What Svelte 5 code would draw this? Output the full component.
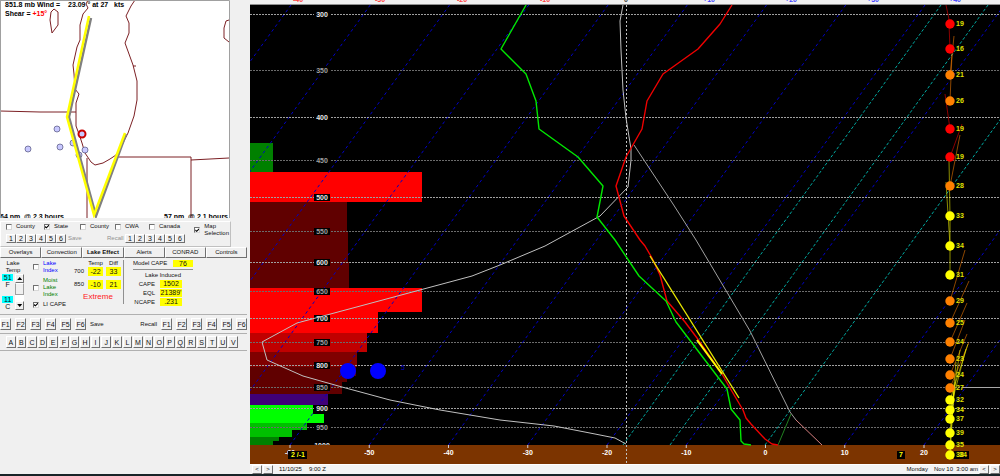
<script lang="ts">
  type Point = [number, number];

  const states = [
    '88,0 86,4 88,8 83,14 80,25 80,40 77,47 73,65 74,74 75,89 79,94 76,103 76,126 79,134 82,143 85,153 91,162 95,165 103,163 110,159 116,155',
    '135,0 131,6 126,16 129,23 129,33 125,43 133,65 137,81 137,100 134,116 128,133 122,145 116,155',
    '54,9 51,12 50,20 52,33 58,25 58,12 54,9',
    '229,20 226,21 224,28 224,38 229,42',
    '0,111 40,112 76,112',
    '87,158 87,218',
    '116,157 191,157 191,218',
    '191,160 229,158',
    '133,66 136,66',
  ];

  const stations: Point[] = [[28, 149], [57, 129], [60, 147], [73, 143], [79, 155], [85, 150]];

  let layers = $state([
    { label: 'County', on: false },
    { label: 'State', on: true },
    { label: 'County', on: false },
    { label: 'CWA', on: false },
    { label: 'Canada', on: false },
  ]);

  const slots = [1, 2, 3, 4, 5, 6];
  const tabs = ['Overlays', 'Convection', 'Lake Effect', 'Alerts', 'CONRAD', 'Controls'];
  let activeTab = $state('Lake Effect');
  const letters = 'ABCDEFGHIJKLMNOPQRSTUV'.split('');

  const induced = [
    ['CAPE', '1502'],
    ['EQL', "21389'"],
    ['NCAPE', '.231'],
  ];

  const isobars = [
    { mb: 300, y: 14 }, { mb: 350, y: 70 }, { mb: 400, y: 117 }, { mb: 450, y: 160 },
    { mb: 500, y: 197 }, { mb: 550, y: 231 }, { mb: 600, y: 262 }, { mb: 650, y: 291 },
    { mb: 700, y: 318 }, { mb: 750, y: 342 }, { mb: 800, y: 365 }, { mb: 850, y: 387 },
    { mb: 900, y: 408 }, { mb: 950, y: 427 }, { mb: 1000, y: 445 },
  ];

  // omega bars: width, top, bottom, fill
  const bars: [number, number, number, string][] = [
    [23, 143, 172, '#008000'],
    [172, 172, 202, '#ff0000'],
    [97, 202, 232, '#600000'],
    [98, 232, 262, '#600000'],
    [99, 262, 288, '#600000'],
    [172, 288, 312, '#ff0000'],
    [128, 312, 333, '#ff0000'],
    [117, 333, 352, '#c00000'],
    [107, 352, 367, '#800000'],
    [106, 367, 376, '#600000'],
    [97, 376, 382, '#600000'],
    [92, 382, 394, '#600000'],
    [78, 394, 405, '#400078'],
    [63, 405, 414, '#00ff00'],
    [74, 414, 423, '#00ff00'],
    [57, 423, 430, '#00c000'],
    [42, 430, 437, '#00c000'],
    [29, 437, 441, '#008000'],
    [23, 441, 445, '#008000'],
  ];

  // the 0 degree line is left to the mixing ratio drawn over it
  const isotherms = [-8, -7, -6, -5, -4, -3, -2, -1, 0, 1, 2, 3, 4, 5, 7, 8].map((i) => 40 + i * 79.25);
  const mixing = [373, 420, 515];
  const skew = 318;

  const temps = [-60, -50, -40, -30, -20, -10, 0, 10, 20].map((t, i) => ({ t, x: 40 + i * 79.25 }));

  const topTemps = [
    { t: '-40', x: 48, warm: true }, { t: '-30', x: 130, warm: true }, { t: '-20', x: 212, warm: true },
    { t: '-10', x: 295, warm: true }, { t: '0', x: 376, warm: false }, { t: '+10', x: 459, warm: false },
    { t: '+20', x: 541, warm: false }, { t: '+30', x: 623, warm: false }, { t: '+40', x: 705, warm: false },
  ];

  const RED = '#ff0000';
  const ORANGE = '#ff8000';
  const YELLOW = '#ffff00';

  // wind level: y, speed, colour, barb tip
  const winds: [number, string, string, Point][] = [
    [24, '19', RED, [696, 5]],
    [49, '16', RED, [699, 24]],
    [75, '21', ORANGE, [704, 36]],
    [101, '26', ORANGE, [702, 54]],
    [129, '19', RED, [695, 94]],
    [157, '19', RED, [712, 124]],
    [186, '28', ORANGE, [710, 135]],
    [216, '33', YELLOW, [699, 160]],
    [246, '34', YELLOW, [696, 182]],
    [275, '31', YELLOW, [700, 218]],
    [301, '29', ORANGE, [715, 250]],
    [323, '25', ORANGE, [719, 281]],
    [342, '24', ORANGE, [717, 303]],
    [359, '23', ORANGE, [715, 320]],
    [375, '24', ORANGE, [717, 334]],
    [388, '27', ORANGE, [719, 342]],
    [400, '32', YELLOW, [718, 344]],
    [410, '34', YELLOW, [716, 349]],
    [419, '37', YELLOW, [710, 350]],
    [433, '39', YELLOW, [706, 362]],
    [445, '35', YELLOW, [705, 382]],
    [455, '38', YELLOW, [704, 390]],
  ];
</script>

<main>
  <aside>
    <svg class="map" viewBox="0 0 230 218" role="img" aria-label="Lake Michigan map">
      <rect width="230" height="218" fill="#fff" />
      {#each states as points}
        <polyline {points} fill="none" stroke="#7c2024" />
      {/each}
      {#each stations as [cx, cy]}
        <circle {cx} {cy} r="3" fill="#c8c8ff" stroke="#50507c" stroke-width=".7" />
      {/each}
      <polyline points="91,18 69,117 96,216 126,134" fill="none" stroke="#808080" stroke-width="2.5" />
      <polyline points="89,16 67,117 94,215 125,133" fill="none" stroke="#ffff00" stroke-width="2.5" />
      <circle cx="82" cy="134" r="3.5" fill="#c8c8ff" stroke="#c80000" stroke-width="2" />
      <text x="5" y="7">851.8 mb Wind =</text>
      <text x="68" y="7">23.09 ° at 27&nbsp;&nbsp; kts</text>
      <text x="5" y="16">Shear = <tspan fill="#f00">+15°</tspan></text>
      <text x="0" y="219">64 nm&nbsp; @ 2.3 hours</text>
      <text x="228" y="219" text-anchor="end">57 nm&nbsp; @ 2.1 hours</text>
      <path d="M0 .5H229.500V218M.5 0V218" fill="none" stroke="#a0a0a0" />
    </svg>

    <section class="options">
      <div>
        <div class="layers">
          {#each layers as layer}
            <label><input type="checkbox" bind:checked={layer.on} />{layer.label}</label>
          {/each}
        </div>
        <div class="slots">
          {#each slots as n}<button type="button">{n}</button>{/each}
          <span class="save">Save</span>
          <span class="recall">Recall</span>
          {#each slots as n}<button type="button">{n}</button>{/each}
        </div>
      </div>
      <label class="selection"><input type="checkbox" checked /><span>Map<br />Selection</span></label>
    </section>

    <nav class="tabs">
      {#each tabs as tab}
        <button type="button" class:active={tab === activeTab} onclick={() => (activeTab = tab)}>{tab}</button>
      {/each}
    </nav>

    <section class="lake">
      <div class="lake-temp">
        <div class="center">Lake<br />Temp</div>
        <div class="temp-row">
          <div class="readings">
            <span class="cyan">51</span>
            <span>F</span>
            <span class="cyan second">11</span>
            <span>C</span>
          </div>
          <div class="scroller">
            <button type="button" aria-label="Warmer"><i class="up"></i></button>
            <div class="track"><span></span></div>
            <button type="button" aria-label="Colder"><i class="down"></i></button>
          </div>
        </div>
      </div>

      <div class="indices">
        <label class="blue"><input type="checkbox" /><span>Lake<br />Index</span></label>
        <label class="green"><input type="checkbox" /><span>Moist<br />Lake<br />Index</span></label>
        <label><input type="checkbox" checked /><span>LI CAPE</span></label>
      </div>

      <div class="diffs">
        <table>
          <thead>
            <tr><th></th><th>Temp</th><th>Diff</th></tr>
          </thead>
          <tbody>
            <tr><th>700</th><td><b>-22</b></td><td><b>33</b></td></tr>
            <tr><th>850</th><td><b>-10</b></td><td><b>21</b></td></tr>
          </tbody>
        </table>
        <p>Extreme</p>
      </div>

      <div class="cape">
        <div class="model"><span>Model CAPE</span><b>76</b></div>
        <div class="title">Lake Induced</div>
        <dl>
          {#each induced as [name, value]}
            <dt>{name}</dt>
            <dd>{value}</dd>
          {/each}
        </dl>
      </div>
    </section>

    <section class="functions">
      {#each slots as n}<button type="button">F{n}</button>{/each}
      <span class="fsave">Save</span>
      <span>Recall</span>
      {#each slots as n}<button type="button">F{n}</button>{/each}
    </section>

    <section class="letters">
      {#each letters as letter}<button type="button">{letter}</button>{/each}
    </section>
  </aside>

  <div class="sounding">
    <svg viewBox="0 0 750 464" role="img" aria-label="Skew-T sounding">
      <defs>
        <clipPath id="top"><rect width="750" height="4" /></clipPath>
        <clipPath id="plot"><rect y="5" width="750" height="440" /></clipPath>
      </defs>
      <rect width="750" height="464" fill="#f0f0f0" />
      <g clip-path="url(#top)" text-anchor="middle">
        {#each topTemps as { t, x, warm }}
          <text {x} y="2" fill={warm ? '#ff4040' : t === '0' ? '#404040' : '#4040ff'}>{t}</text>
        {/each}
      </g>
      <rect y="4" width="750" height="1" fill="#909090" />
      <rect y="5" width="750" height="440" />
      <rect y="445" width="750" height="19" fill="#7c3400" />

      <g clip-path="url(#plot)">
        {#each bars as [width, top, bottom, fill]}
          <rect y={top} {width} height={bottom - top} {fill} shape-rendering="crispEdges" />
        {/each}
        {#each isotherms as x}
          <line x1={x} y1="445" x2={x + skew} y2="5" stroke="#0000c8" stroke-dasharray="3 3" />
        {/each}
        {#each mixing as x}
          <line x1={x} y1="445" x2={x + skew} y2="5" stroke="#00a8a0" stroke-dasharray="3 2" />
        {/each}
        {#each isobars as { mb, y }}
          {#if mb < 1000}
            <line x2="750" y1={y + 0.5} y2={y + 0.5} stroke={mb % 100 ? '#6c6c6c' : '#a0a0a0'} stroke-dasharray="2 1" />
          {/if}
          <rect x="64" y={y - 3} width="16" height="7" />
          <text x="72" y={y + 3} text-anchor="middle" fill={mb % 100 ? '#a0a0a0' : '#e8e8e8'}>{mb}</text>
        {/each}
      </g>

      <line x1="376.500" y1="5" x2="376.500" y2="464" stroke="#c0c0c0" stroke-dasharray="2 2" />
      <line x1="713" y1="387.500" x2="750" y2="387.500" stroke="#a8a8a8" />

      <g fill="none" stroke-linejoin="round">
        <polyline points="373,5 370,21 371,50 373,90 376,118 381,149 381,160 378,187 350,216 295,246 250,265 222,276 47,323 12,342 17,360 53,376 92,387 140,400 190,410 250,420 304,426 345,434 365,438 376,444" stroke="#c0c0c0" />
        <polyline points="384,145 423,204 446,240 500,331 540,412 546,420" stroke="#a0a0a0" />
        <polyline points="546,420 572,445" stroke="#d88080" />
        <line x1="528" y1="445" x2="541" y2="414" stroke="#208020" />
        <polyline points="482,5 470,24 448,49 413,74 397,101 392,129 376,157 366,186 374,216 390,240 395,246 402,258 410,275 417,301 435,322 447,338 472,374 480,388 493,410 496,418 501,424 515,439 522,444 528,445" stroke="#f00000" stroke-width="1.4" />
        <polyline points="276,5 251,49 276,74 286,101 289,129 328,157 353,186 347,217 365,240 389,276 416,301 426,322 477,389 481,409 490,420 491,441 494,444 501,445" stroke="#00e800" stroke-width="1.4" />
        <line x1="400" y1="256" x2="489" y2="398" stroke="#e8e800" stroke-width="1.4" />
        <line x1="447" y1="340" x2="472" y2="374" stroke="#ffff00" stroke-width="2" />
      </g>

      <circle cx="98" cy="371" r="8" fill="#00f" />
      <circle cx="128" cy="371" r="8" fill="#00f" />
      <text class="faint" x="151" y="370" fill="#0000c0">5</text>

      {#each temps as { t, x }}
        <line x1={x} y1="445" x2={x} y2="448" stroke="#d0d0d0" />
        <text {x} y="455" text-anchor="middle" fill="#fff">{t}</text>
      {/each}

      <g text-anchor="middle" fill="#ff0">
        <rect x="38" y="451" width="19" height="8" fill="#000" />
        <text x="48" y="457">2 /-1</text>
        <rect x="647" y="451" width="8" height="8" fill="#000" />
        <text x="651" y="457">7</text>
        <rect x="704" y="451" width="15" height="8" fill="#000" />
      </g>

      {#each winds as [y, , color, tip]}
        <line x1="700" y1={y} x2={tip[0]} y2={tip[1]} stroke={color} stroke-opacity=".55" />
      {/each}
      {#each winds as [y, speed, color]}
        <circle cx="700" cy={y} r="4.700" fill={color} />
        <text x="706" y={y + 2} fill="#e0e000">{speed}</text>
      {/each}
      <text x="709" y="457" fill="#e0e000">34</text>
    </svg>

    <footer>
      <button type="button" aria-label="Previous hour">&lt;</button>
      <button type="button" aria-label="Next hour">&gt;</button>
      <span class="date">11/10/25</span>
      <span>9:00 Z</span>
      <span class="local">Monday</span>
      <span>Nov 10&nbsp; 3:00 am</span>
      <button type="button" aria-label="Previous day">&lt;</button>
      <button type="button" aria-label="Next day">&gt;</button>
    </footer>
  </div>
</main>

<style>
  :global(body) {
    margin: 0;
    background: #f0f0f0;
  }

  main {
    display: grid;
    grid-template-columns: 247px 1fr;
    column-gap: 3px;
    border-bottom: 2px solid #182428;
    color: #101010;
    font: 6px/7px 'Liberation Sans', Arial, sans-serif;
  }

  svg {
    display: block;
    width: 100%;
  }

  svg text {
    font: bold 7px 'Liberation Sans', Arial, sans-serif;
  }

  svg .faint {
    font-weight: normal;
  }

  .map {
    width: 230px;
  }

  button {
    display: flex;
    justify-content: center;
    align-items: center;
    box-sizing: border-box;
    margin: 0;
    border: 1px solid;
    border-color: #fff #707070 #707070 #fff;
    padding: 0;
    background: #f0f0f0;
    color: inherit;
    font: inherit;
    cursor: pointer;
  }

  label {
    display: flex;
    align-items: center;
    gap: 4px;
    white-space: nowrap;
  }

  input {
    flex: none;
    box-sizing: border-box;
    width: 6px;
    height: 6px;
    margin: 0;
    appearance: none;
    border: 1px solid;
    border-color: #707070 #d8d8d8 #d8d8d8 #707070;
    background: #fff;
  }

  input:checked::after {
    content: '';
    display: block;
    width: 4px;
    height: 4px;
    background: #000;
    clip-path: polygon(0 35%, 35% 65%, 100% 0, 100% 40%, 35% 100%, 0 75%);
  }

  b {
    font-weight: normal;
  }

  .options {
    display: flex;
    justify-content: space-between;
    align-items: flex-start;
    box-sizing: border-box;
    width: 231px;
    height: 26px;
    margin-top: 3px;
    border: 1px solid;
    border-color: #fff #c0c0c0 #c0c0c0 #fff;
    padding: 1px 1px 0 5px;
  }

  .layers {
    display: grid;
    grid-template-columns: 38px 36px 35px 34px 36px;
    margin-bottom: 4px;
  }

  .slots {
    display: flex;
    align-items: center;
  }

  .slots button {
    width: 10px;
    height: 9px;
    font-size: 7px;
  }

  .save {
    width: 39px;
    padding-left: 2px;
    color: #909090;
  }

  .recall {
    width: 18px;
    color: #909090;
  }

  .tabs {
    display: grid;
    grid-template-columns: repeat(6, 1fr);
  }

  .tabs button {
    height: 11px;
  }

  .tabs .active {
    font-weight: bold;
  }

  .lake {
    display: grid;
    grid-template-columns: 22px 31px 51px 1fr;
    column-gap: 9px;
    box-sizing: border-box;
    height: 57px;
    border-bottom: 1px solid #b0b0b0;
    padding: 2px 0 0 2px;
  }

  .center {
    text-align: center;
  }

  .temp-row {
    display: flex;
    gap: 2px;
  }

  .readings {
    display: flex;
    flex-direction: column;
    width: 12px;
    font-size: 7px;
    text-align: center;
  }

  .cyan {
    background: #00ffff;
  }

  .second {
    margin-top: 8px;
  }

  .scroller {
    display: flex;
    flex-direction: column;
    width: 9px;
  }

  .scroller button {
    height: 9px;
  }

  .scroller i {
    width: 5px;
    height: 3px;
    background: #000;
  }

  .up {
    clip-path: polygon(50% 0, 100% 100%, 0 100%);
  }

  .down {
    clip-path: polygon(0 0, 100% 0, 50% 100%);
  }

  .track {
    height: 18px;
    background: #fff;
  }

  .track span {
    display: block;
    height: 10px;
    border: 1px solid #a0a0a0;
    border-top-color: #fff;
    background: #f0f0f0;
  }

  .indices {
    display: flex;
    flex-direction: column;
    gap: 3px;
  }

  .blue {
    color: #0000ff;
  }

  .green {
    color: #008000;
  }

  .diffs {
    height: 44px;
    border-right: 1px solid #909090;
  }

  table {
    border-collapse: collapse;
  }

  th,
  td {
    padding: 0;
    font-weight: normal;
    text-align: center;
  }

  tbody th {
    width: 12px;
    vertical-align: top;
    line-height: 9px;
  }

  td {
    height: 13px;
    padding-left: 3px;
    vertical-align: top;
  }

  thead th + th {
    padding-left: 3px;
  }

  td b {
    display: block;
    width: 15px;
    background: #ffff00;
    font-size: 7px;
    line-height: 9px;
  }

  p {
    margin: 0;
    color: #ff2020;
    font-size: 8px;
    line-height: 8px;
    text-align: center;
  }

  .cape {
    width: 60px;
    text-align: center;
  }

  .model {
    display: flex;
    justify-content: space-between;
    margin-bottom: 2px;
    border-bottom: 1px solid #909090;
    padding-bottom: 2px;
  }

  .model b {
    width: 20px;
    background: #ffff00;
    font-size: 7px;
  }

  dl {
    display: grid;
    grid-template-columns: 22px 22px;
    gap: 1px 5px;
    margin: 1px 0 0;
    line-height: 8px;
    text-align: right;
  }

  dd {
    margin: 0;
    background: #ffff00;
    font-size: 7px;
    text-align: center;
  }

  .functions {
    display: flex;
    align-items: center;
    gap: 4px;
    box-sizing: border-box;
    height: 19px;
    border-bottom: 1px solid #b0b0b0;
  }

  .functions button {
    width: 11px;
    height: 12px;
    font-size: 7px;
  }

  .fsave {
    margin-right: auto;
  }

  .letters {
    display: flex;
    gap: 1px;
    border-bottom: 1px solid #b0b0b0;
    padding: 2px 9px 2px 6px;
  }

  .letters button {
    flex: 1;
    height: 12px;
    font-size: 7px;
  }

  footer {
    display: flex;
    align-items: center;
    gap: 1px;
    height: 9px;
    border-top: 1px solid #fff;
    padding-left: 2px;
    background: #f4f4f4;
  }

  footer button {
    width: 10px;
    height: 9px;
  }

  .date {
    margin: 0 6px 0 5px;
  }

  .local {
    margin: 0 5px 0 auto;
  }
</style>
